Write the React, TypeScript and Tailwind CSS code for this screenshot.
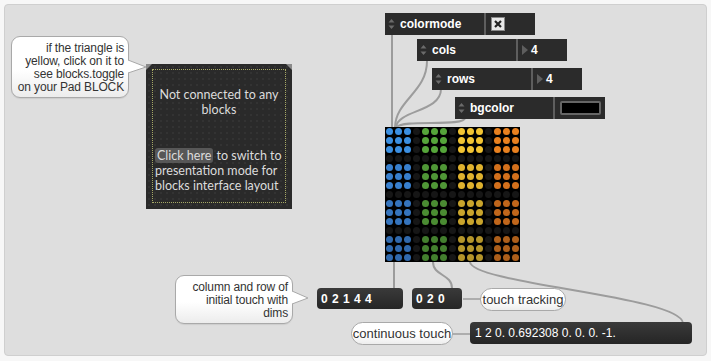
import React from "react";

const shades = [
  ["#3b8fe1", "#55a53a", "#f2c433", "#e8801f"],
  ["#387fcd", "#4f9636", "#dfb22e", "#d3701c"],
  ["#3574bd", "#4a8b32", "#c9a42c", "#c0661b"],
  ["#3069ad", "#437f2e", "#b4952a", "#ac5e1a"],
];

function Matrix() {
  const cells = [];
  for (let r = 0; r < 15; r++) {
    for (let c = 0; c < 15; c++) {
      const off = r % 4 === 3 || c % 4 === 3;
      const color = off ? "#161616" : shades[Math.floor(r / 4)][Math.floor(c / 4)];
      cells.push(
        <div key={r + "-" + c} className="flex items-center justify-center">
          <div className="w-[7px] h-[7px] rounded-full" style={{ background: color }} />
        </div>
      );
    }
  }
  return (
    <div className="absolute left-[385px] top-[127px] w-[135px] h-[135px] bg-black grid grid-cols-[repeat(15,9px)] grid-rows-[repeat(15,9px)]">
      {cells}
    </div>
  );
}

function Arrows() {
  return (
    <svg width="7" height="12" viewBox="0 0 7 12" className="shrink-0">
      <path d="M3.5 1 L6.5 4.5 H0.5 Z" fill="#6b6b6b" />
      <path d="M3.5 11 L6.5 7.5 H0.5 Z" fill="#6b6b6b" />
    </svg>
  );
}

function AttrUI({
  left,
  top,
  label,
  split,
  children,
}: {
  left: number;
  top: number;
  label: string;
  split: number;
  children: React.ReactNode;
}) {
  return (
    <div
      className="absolute h-[22px] w-[150px] bg-[#2b2b2b] flex text-white"
      style={{ left, top }}
    >
      <div className="flex items-center gap-[5px] pl-[3px] h-full border-r-2 border-[#5e5e5e]" style={{ width: split }}>
        <Arrows />
        <span className="text-[12px] font-bold leading-none">{label}</span>
      </div>
      <div className="flex-1 flex items-center pl-[4px]">{children}</div>
    </div>
  );
}

function Bubble({
  left,
  top,
  width,
  height,
  tipX,
  tipY,
  children,
}: {
  left: number;
  top: number;
  width: number;
  height: number;
  tipX: number;
  tipY: number;
  children: React.ReactNode;
}) {
  const right = left + width;
  return (
    <>
      <div
        className="absolute rounded-[9px] border border-[#a9a9a9] bg-[linear-gradient(#ffffff_55%,#ececec)] text-right text-[12px] leading-[13px] tracking-[-0.15px] text-[#333] pr-[4px] pt-[5px] shadow-[0_1px_1px_rgba(0,0,0,0.08)] whitespace-nowrap"
        style={{ left, top, width, height }}
      >
        {children}
      </div>
      <svg className="absolute left-0 top-0 overflow-visible" width="1" height="1">
        <path
          d={`M${right - 1} ${tipY - 7} L${tipX} ${tipY} L${right - 1} ${tipY + 6}`}
          fill="#ffffff"
          stroke="#a9a9a9"
          strokeWidth="1"
        />
      </svg>
    </>
  );
}

function Pill({ left, top, width, text }: { left: number; top: number; width: number; text: string }) {
  return (
    <div
      className="absolute h-[23px] rounded-full border border-[#a9a9a9] bg-[linear-gradient(#ffffff_55%,#ededed)] flex items-center justify-center text-[13px] text-[#333]"
      style={{ left, top, width }}
    >
      {text}
    </div>
  );
}

export default function App() {
  return (
    <div className="w-[711px] h-[361px] bg-[#f7f7f7] p-[4px] font-['Liberation_Sans',Arial,sans-serif]">
      <div className="relative w-[703px] h-[352px] bg-[#dedede] rounded-[4px] border border-[#cfcfcf] overflow-hidden">
        <div className="absolute -left-[5px] -top-[5px] w-[711px] h-[361px]">
          {/* patch cords */}
          <svg className="absolute left-0 top-0" width="711" height="361" fill="none" stroke="#9c9c9c" strokeWidth="2">
            <path d="M392 35 L392 127" />
            <path d="M427 61 C427 92, 396 100, 395 127" />
            <path d="M441 89 C441 112, 398 110, 396 127" />
            <path d="M465 118 C465 127, 402 119, 397 127" />
            <path d="M394 262 L394 288" />
            <path d="M433 262 C433 276, 452 274, 452 288" />
            <path d="M470 262 C472 284, 680 296, 683 323" />
            <path d="M463 299 L481 299" strokeWidth="1.5" />
            <path d="M452 334 L470 334" strokeWidth="1.5" />
          </svg>

          <Bubble left={11} top={36} width={118} height={62} tipX={146} tipY={67}>
            if the triangle is
            <br />
            yellow, click on it to
            <br />
            see blocks.toggle
            <br />
            on your Pad BLOCK
          </Bubble>

          {/* blocks status panel */}
          <div className="absolute left-[146px] top-[64px] w-[146px] h-[145px] bg-[#2a2a2a] bg-[radial-gradient(circle,#333333_1px,transparent_1.5px)] bg-[size:6px_6px] font-['Lato',sans-serif] text-[#dcdcdc] text-[12.5px] leading-[15px]">
            <div className="absolute left-0 top-0 w-0 h-0 border-t-[6px] border-r-[6px] border-t-[#8a8a8a] border-r-transparent" />
            <div className="absolute right-0 top-0 w-0 h-0 border-t-[6px] border-l-[6px] border-t-[#8a8a8a] border-l-transparent" />
            <div className="absolute left-[6px] top-[5px] right-[6px] bottom-[6px] border border-dotted border-[#a6a865] flex flex-col">
              <div className="text-center pt-[17px]">
                Not connected to any
                <br />
                blocks
              </div>
              <div className="pl-[2px] pt-[31px]">
                <span className="bg-[#575757] rounded-[3px] px-[2px]">Click here</span> to switch to
                <br />
                presentation mode for
                <br />
                blocks interface layout
              </div>
            </div>
          </div>

          <AttrUI left={385} top={13} label="colormode" split={101}>
            <div className="w-[14px] h-[14px] bg-[#e8e8e8] border border-[#888] flex items-center justify-center ml-[1px]">
              <svg width="10" height="10" viewBox="0 0 10 10">
                <path d="M2 2 L8 8 M8 2 L2 8" stroke="#222" strokeWidth="2.2" />
              </svg>
            </div>
          </AttrUI>
          <AttrUI left={417} top={39} label="cols" split={101}>
            <svg width="6" height="10" viewBox="0 0 6 10">
              <path d="M0 0 L6 5 L0 10 Z" fill="#5e5e5e" />
            </svg>
            <span className="text-[12px] font-bold ml-[3px]">4</span>
          </AttrUI>
          <AttrUI left={432} top={68} label="rows" split={101}>
            <svg width="6" height="10" viewBox="0 0 6 10">
              <path d="M0 0 L6 5 L0 10 Z" fill="#5e5e5e" />
            </svg>
            <span className="text-[12px] font-bold ml-[3px]">4</span>
          </AttrUI>
          <AttrUI left={455} top={97} label="bgcolor" split={100}>
            <div className="w-[41px] h-[14px] bg-black border-2 border-[#666] rounded-[2px] ml-[1px]" />
          </AttrUI>

          <Matrix />

          {/* outputs */}
          <div className="absolute left-[317px] top-[288px] w-[86px] h-[21px] rounded-[4px] bg-[linear-gradient(#3a3a3a,#262626)] text-white text-[12px] font-bold tracking-[0.5px] flex items-center pl-[4px]">
            0 2 1 4 4
          </div>
          <div className="absolute left-[412px] top-[288px] w-[50px] h-[21px] rounded-[4px] bg-[linear-gradient(#3a3a3a,#262626)] text-white text-[12px] font-bold tracking-[0.5px] flex items-center pl-[4px]">
            0 2 0
          </div>
          <Pill left={480} top={288} width={86} text="touch tracking" />

          <Bubble left={175} top={275} width={118} height={49} tipX={308} tipY={298}>
            column and row of
            <br />
            initial touch with
            <br />
            dims
          </Bubble>

          <Pill left={351} top={322} width={102} text="continuous touch" />
          <div className="absolute left-[470px] top-[322px] w-[222px] h-[22px] rounded-[4px] bg-[linear-gradient(#3a3a3a,#252525)] text-white text-[12px] flex items-center pl-[5px]">
            1 2 0. 0.692308 0. 0. 0. -1.
          </div>
        </div>
      </div>
    </div>
  );
}
